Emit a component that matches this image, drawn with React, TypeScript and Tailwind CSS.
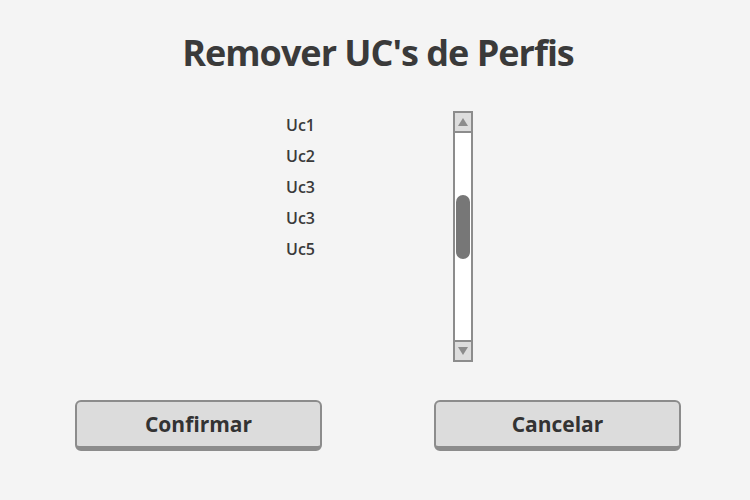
const ucs = ["Uc1", "Uc2", "Uc3", "Uc3", "Uc5"];

const ScrollArrow = ({ down }: { down?: boolean }) => (
  <div className="h-[18px] bg-[#dddddd] flex items-center justify-center">
    <svg width="10" height="8" viewBox="0 0 10 8" className={down ? "rotate-180" : ""}>
      <polygon points="5,0 10,8 0,8" fill="#8c8c8c" />
    </svg>
  </div>
);

const Scrollbar = () => (
  <div className="w-[20px] h-[251px] border-2 border-[#8c8c8c] bg-white flex flex-col">
    <ScrollArrow />
    <div className="h-[2px] bg-[#8c8c8c]" />
    <div className="flex-1 pt-[62px] px-[1px]">
      <div className="h-[64px] rounded-full bg-[#777777]" />
    </div>
    <div className="h-[2px] bg-[#8c8c8c]" />
    <ScrollArrow down />
  </div>
);

const ActionButton = ({ label }: { label: string }) => (
  <button className="w-[247px] h-[51px] rounded-md border-2 border-[#8c8c8c] border-b-[5px] bg-[#dcdcdc] text-[21px] font-bold text-[#333333] pt-[1px]">
    {label}
  </button>
);

export default function App() {
  return (
    <div
      className="w-[750px] h-[500px] bg-[#f4f4f4] flex flex-col items-center"
      style={{ fontFamily: '"Open Sans", "Noto Sans", sans-serif' }}
    >
      <h1 className="mt-[26px] ml-[6px] text-[36px] font-bold text-[#3a3a3a] tracking-[-1px]">
        Remover UC's de Perfis
      </h1>
      <div className="mt-[31px] w-[190px] ml-[6px] flex justify-between">
        <ul className="pt-[4px] pl-[3px] flex flex-col gap-[10px] text-[16px] font-semibold text-[#3a3a3a] leading-[21px]">
          {ucs.map((uc, i) => (
            <li key={i}>{uc}</li>
          ))}
        </ul>
        <Scrollbar />
      </div>
      <div className="mt-[38px] ml-[6px] flex gap-[112px]">
        <ActionButton label="Confirmar" />
        <ActionButton label="Cancelar" />
      </div>
    </div>
  );
}
